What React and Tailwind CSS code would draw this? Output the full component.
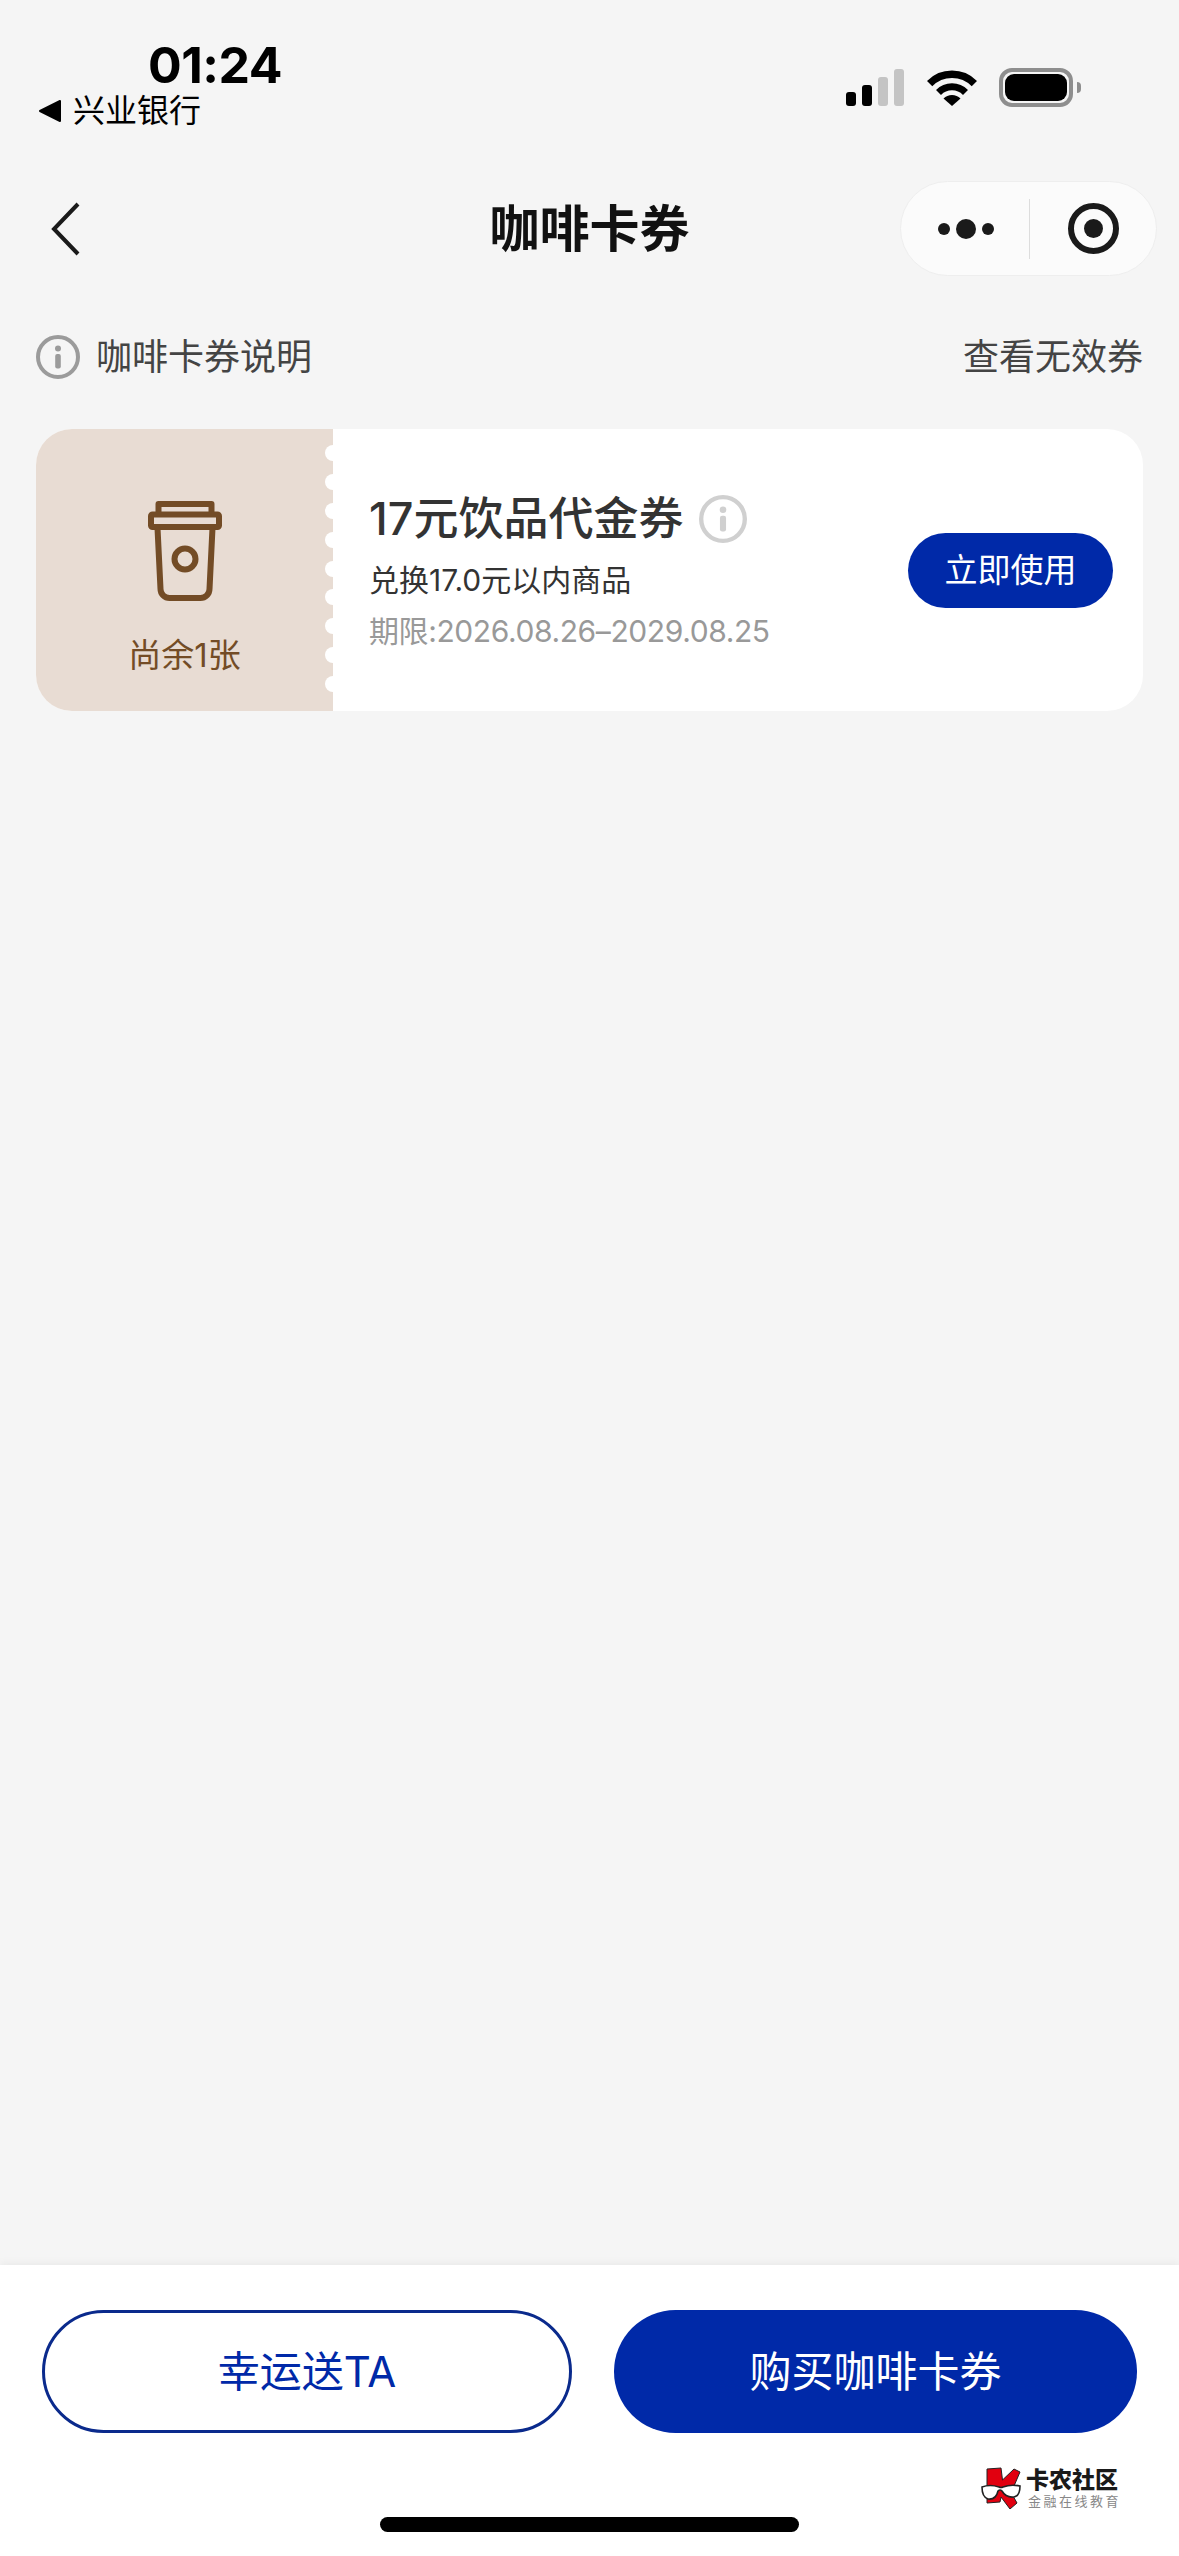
import React from "react";

const NOTCHES = [0, 1, 2, 3, 4, 5, 6, 7, 8];

const InfoIcon = ({ size, color, strokeWidth = 4 }) => (
  <svg width={size} height={size} viewBox="0 0 44 44" fill="none">
    <circle cx="22" cy="22" r={22 - strokeWidth / 2} stroke={color} strokeWidth={strokeWidth} />
    <circle cx="22" cy="13.5" r="3" fill={color} />
    <rect x="19.2" y="19" width="5.6" height="14.5" rx="2" fill={color} />
  </svg>
);

const CupIcon = () => (
  <svg width="74" height="100" viewBox="0 0 74 100" fill="none" stroke="#734c26" strokeWidth="6" strokeLinejoin="round">
    <path d="M10.500 11V3h53V11" />
    <rect x="3" y="13.500" width="68" height="12.500" rx="1.500" />
    <path d="M9.500 27l3 61a9 9 0 0 0 9 9h31a9 9 0 0 0 9-9l3-61" />
    <circle cx="37" cy="58" r="10.500" />
  </svg>
);

const WifiIcon = () => (
  <svg width="50" height="37" viewBox="0 0 50 37" fill="none">
    <path d="M2.600 14.600a31.500 31.500 0 0 1 44.800 0" stroke="#000" strokeWidth="7.500" />
    <path d="M11.500 23.500a19 19 0 0 1 27 0" stroke="#000" strokeWidth="7" />
    <path d="M16.500 29.500a12 12 0 0 1 17 0L25 37z" fill="#000" />
  </svg>
);

const LogoMark = () => (
  <svg width="40" height="42" viewBox="0 0 40 42" className="shrink-0">
    <path d="M6 2l14-1 1.500 12L33 2l6 3-6 14-5 3 8 14-7 6-9-12-1 5-13 1z" fill="#e1000f" stroke="#222" strokeWidth="1" />
    <path d="M1 20q8-3 17 0q2 1 4 0q8-3 17-1q0 10-6 11q-8 1-12-6q-2-2-4 0q-2 9-10 8q-6-2-6-12z" fill="#fff" stroke="#222" strokeWidth="1.600" />
  </svg>
);

export default function App() {
  return (
    <div className="w-[1179px] h-[2556px] flex flex-col bg-[#f5f5f5] font-['Inter','Noto_Sans_CJK_SC',sans-serif] overflow-hidden">
      {/* Status bar */}
      <div className="h-[181px] flex justify-between">
        <div className="pt-[35px] pl-[39px]">
          <div className="pl-[109px] text-[50px] leading-[60px] font-bold text-black tracking-[-0.5px]">01:24</div>
          <div className="flex items-center gap-[12px] h-[36px] -mt-[2px]">
            <svg width="22" height="24" viewBox="0 0 22 24">
              <path d="M1 12L21 2v20z" fill="#000" stroke="#000" strokeLinejoin="round" strokeWidth="2" />
            </svg>
            <span className="text-[32px] leading-[36px] text-black">兴业银行</span>
          </div>
        </div>
        <div className="pt-[68px] pr-[98px] flex items-start">
          <div className="flex items-end gap-[6px] h-[37px] mt-[1px]">
            <div className="w-[10px] h-[14px] rounded-[3px] bg-black" />
            <div className="w-[10px] h-[21px] rounded-[3px] bg-black" />
            <div className="w-[10px] h-[29px] rounded-[3px] bg-[#c4c4c4]" />
            <div className="w-[10px] h-[37px] rounded-[3px] bg-[#c4c4c4]" />
          </div>
          <div className="ml-[23px] mt-[1px]">
            <WifiIcon />
          </div>
          <div className="ml-[22px] flex items-center">
            <div className="w-[74px] h-[39px] rounded-[13px] border-[4px] border-[#8e8e8e] p-[2px]">
              <div className="w-full h-full rounded-[9px] bg-black" />
            </div>
            <div className="ml-[4px] w-[4px] h-[11px] rounded-r-full bg-[#8e8e8e]" />
          </div>
        </div>
      </div>

      {/* Nav bar */}
      <div className="h-[95px] grid grid-cols-[1fr_auto_1fr] items-center px-[22px]">
        <svg width="30" height="54" viewBox="0 0 30 54" fill="none" className="ml-[28px]">
          <path d="M28 2L4 27l24 25" stroke="#1a1a1a" strokeWidth="4" />
        </svg>
        <h1 className="text-[50px] leading-[60px] font-bold text-[#111]">咖啡卡券</h1>
        <div className="justify-self-end w-[257px] h-[95px] rounded-full bg-[#fbfbfb] border border-[#eeeeee] flex items-center">
          <div className="w-[128px] flex items-center justify-center gap-[6px] pl-[2px]">
            <div className="w-[12px] h-[12px] rounded-full bg-[#1a1a1a]" />
            <div className="w-[20px] h-[20px] rounded-full bg-[#1a1a1a]" />
            <div className="w-[12px] h-[12px] rounded-full bg-[#1a1a1a]" />
          </div>
          <div className="w-px h-[60px] bg-[#dddddd]" />
          <div className="flex-1 flex items-center justify-center">
            <div className="w-[51px] h-[51px] rounded-full border-[6px] border-[#1a1a1a] flex items-center justify-center">
              <div className="w-[19px] h-[19px] rounded-full bg-[#1a1a1a]" />
            </div>
          </div>
        </div>
      </div>

      {/* Info row */}
      <div className="mt-[56px] h-[50px] px-[36px] flex items-center justify-between">
        <div className="flex items-center gap-[16px]">
          <InfoIcon size={44} color="#9b9b9b" />
          <span className="text-[36px] leading-[50px] text-[#444444]">咖啡卡券说明</span>
        </div>
        <span className="text-[36px] leading-[50px] text-[#444444]">查看无效券</span>
      </div>

      {/* Voucher card */}
      <div className="mt-[47px] mx-[36px] h-[282px] flex rounded-[36px] overflow-hidden bg-white">
        <div className="relative w-[297px] shrink-0 bg-[#e8dcd3] flex flex-col items-center pt-[72px]">
          <CupIcon />
          <span className="mt-[32px] text-[33px] leading-[44px] text-[#734c26]">尚余1张</span>
          <div className="absolute right-0 top-[16px] flex flex-col gap-[12.9px]">
            {NOTCHES.map((n) => (
              <div key={n} className="w-[8px] h-[16px] rounded-l-full bg-white" />
            ))}
          </div>
        </div>
        <div className="flex-1 flex items-center justify-between pl-[36px] pr-[30px]">
          <div className="self-start pt-[60px]">
            <div className="flex items-center gap-[16px] h-[60px]">
              <span className="text-[45px] leading-[60px] font-medium text-[#333333]">17元饮品代金券</span>
              <InfoIcon size={48} color="#d0d0d0" />
            </div>
            <div className="mt-[11px] text-[30px] leading-[40px] text-[#333333]">兑换17.0元以内商品</div>
            <div className="mt-[11px] text-[30px] leading-[40px] text-[#999999] tracking-[-0.4px]">期限:2026.08.26–2029.08.25</div>
          </div>
          <button className="w-[205px] h-[75px] rounded-full bg-[#0029a8] text-white text-[33px] leading-[40px]">立即使用</button>
        </div>
      </div>

      <div className="flex-1" />

      {/* Bottom actions */}
      <div className="relative h-[291px] bg-white shadow-[0_-2px_8px_rgba(0,0,0,0.05)] pt-[45px] flex flex-col items-center">
        <div className="w-full pl-[42px] pr-[42px] flex justify-between">
          <button className="w-[530px] h-[123px] rounded-full border-[3px] border-[#0a2a8c] bg-white text-[#0029a8] text-[42px] leading-[50px]">幸运送TA</button>
          <button className="w-[523px] h-[123px] rounded-full bg-[#0029a8] text-white text-[42px] leading-[50px]">购买咖啡卡券</button>
        </div>
        <div className="mt-[84px] w-[419px] h-[15px] rounded-full bg-black" />

        {/* Watermark */}
        <div className="absolute left-[981px] top-[202px] flex items-center gap-[5px]">
          <LogoMark />
          <div className="flex flex-col">
            <span className="text-[23px] leading-[26px] font-black text-[#1a1a1a] whitespace-nowrap">卡农社区</span>
            <span className="text-[13px] leading-[16px] tracking-[2.5px] text-[#888888] whitespace-nowrap pl-[2px]">金融在线教育</span>
          </div>
        </div>
      </div>
    </div>
  );
}
